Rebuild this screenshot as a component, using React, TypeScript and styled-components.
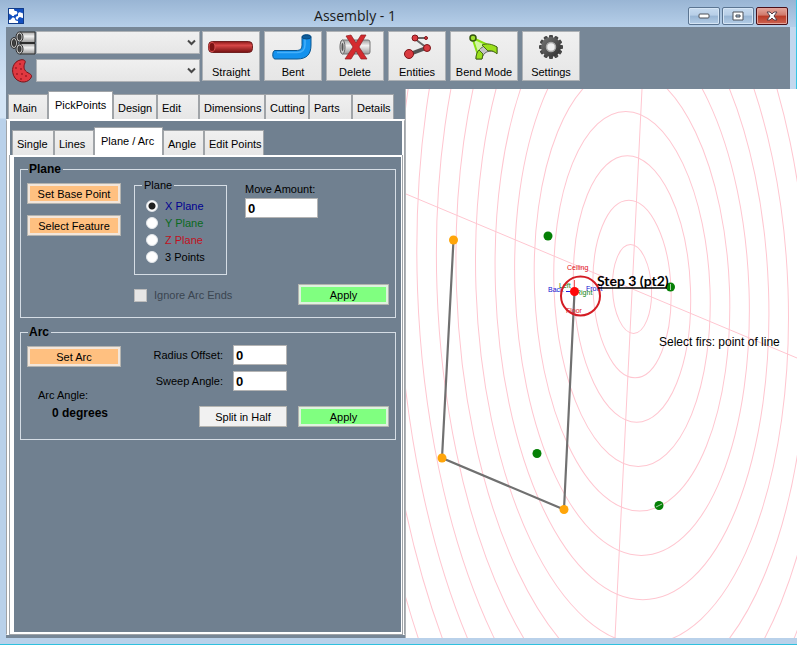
import React from 'react';
import styled, { createGlobalStyle, css } from 'styled-components';

const slate = '#708090';
const strip = '#778797';
const edge = '#a0a4a8';

const GlobalStyle = createGlobalStyle`
  *, *::before, *::after { box-sizing: border-box; }
  body { margin: 0; }
  body, button, input, select {
    font-family: "Liberation Sans", Arial, sans-serif;
    font-size: 11px;
    line-height: 14px;
    color: #000;
  }
`;

const Window = styled.div`
  display: flex;
  flex-direction: column;
  min-height: 100vh;
  background: linear-gradient(#99b5d4 0, #b6cfe9 27px, #d3e4f5 88px, #d3e4f5 118px, #b9d1ea 119px);
  border-bottom: 1px solid #2fc0de;
`;

const TitleBar = styled.header`
  display: grid;
  grid-template-columns: 1fr auto 1fr;
  align-items: center;
  height: 27px;
  padding: 4px 8px 0;
  border-right: 1px solid #35c5e5;
`;

const Title = styled.h1`
  margin: 0;
  padding-right: 86px;
  font: 400 14px/20px "Open Sans", "Noto Sans", sans-serif;
  color: #1a1a1a;
  grid-column: 2;
`;

const Caption = styled.div`
  display: flex;
  justify-content: flex-end;
  gap: 2px;
`;

const CaptionButton = styled.button<{ $close?: boolean }>`
  display: flex;
  align-items: center;
  justify-content: center;
  width: 32px;
  height: 18px;
  padding: 0;
  border: 1px solid ${p => (p.$close ? '#4a1018' : '#5b7592')};
  border-radius: 2px;
  background: ${p => (p.$close
    ? 'linear-gradient(#e3a79d 0, #d0796b 45%, #b93a26 50%, #cc6352 100%)'
    : 'linear-gradient(#c7dbf0 0, #b7cee7 45%, #98b5d4 50%, #b4cde7 100%)')};
  box-shadow: inset 0 0 0 1px ${p => (p.$close ? '#e3a399' : '#d5e5f5')};
`;

const Toolbar = styled.div`
  display: flex;
  align-items: flex-start;
  gap: 4px;
  height: 62px;
  margin: 0 7px 0 6px;
  padding: 4px 4px 0;
  background: ${strip};
  box-shadow: 6px 0 0 #c3d8ee, 7px 0 0 #35c5e5;
`;

const Pickers = styled.div`
  display: grid;
  grid-template-columns: 26px 164px;
  row-gap: 4px;
  margin-right: -2px;
`;

const Combo = styled.label`
  position: relative;
  display: block;

  svg { position: absolute; right: 4px; top: 8px; pointer-events: none; }
`;

const Select = styled.select`
  display: block;
  width: 100%;
  height: 23px;
  appearance: none;
  border: 1px solid #adb1b5;
  border-radius: 0;
  background: linear-gradient(#f0f0f0, #e6e6e6);
`;

const ToolButton = styled.button<{ $wide?: boolean }>`
  display: flex;
  flex-direction: column;
  align-items: center;
  justify-content: space-between;
  width: ${p => (p.$wide ? 68 : 58)}px;
  height: 50px;
  padding: 1px 0;
  border: 1px solid #adb1b5;
  background: linear-gradient(#f0f0f0, #e6e6e6);
  white-space: nowrap;
`;

const Body = styled.main`
  display: flex;
  flex: 1;
  margin-left: 6px;
`;

const Panel = styled.section`
  display: flex;
  flex-direction: column;
  flex: 0 0 399px;
  padding-bottom: 3px;
  background: ${strip};
`;

const Tabs = styled.div<{ $inner?: boolean }>`
  display: flex;
  align-items: flex-end;
  height: ${p => (p.$inner ? 34 : 30)}px;
  padding-left: 2px;
  background: ${p => (p.$inner ? slate : strip)};
`;

const Tab = styled.button<{ $w: number; $on?: boolean }>`
  width: ${p => p.$w}px;
  height: 25px;
  padding: 1px 0 0 4px;
  border: 1px solid ${edge};
  border-bottom: 0;
  background: linear-gradient(#f0f0f0, #e6e6e6);
  text-align: left;
  white-space: nowrap;
  ${p => p.$on && css`
    height: 28px;
    padding: 0 0 2px 6px;
    background: #fff;
  `}
`;

const OuterPage = styled.div`
  display: flex;
  flex: 1;
  flex-direction: column;
  border: 1px solid ${edge};
  border-top: 2px solid #fff;
  border-bottom-color: #fff;
  background: #fff;
  padding: 0 2px 0 3px;
`;

const InnerPage = styled.div`
  display: flex;
  flex: 1;
  flex-direction: column;
  gap: 7px;
  border: solid #fff;
  border-width: 2px 1px 2px 4px;
  outline: 1px solid ${edge};
  outline-offset: 0;
  clip-path: inset(0 -1px -1px -1px);
  background: ${slate};
  padding: 5px 5px 0 6px;
`;

const Group = styled.fieldset`
  display: grid;
  grid-template-columns: 94px 93px 1fr;
  column-gap: 13px;
  margin: 0;
  min-width: 0;
  padding: 2px 6px 12px;
  border: 1px solid #d5dde5;
`;

const Legend = styled.legend`
  margin-left: 1px;
  padding: 0 2px 0 1px;
  font: 700 12px/14px "Liberation Sans", Arial, sans-serif;
`;

const SubGroup = styled.fieldset`
  display: flex;
  flex-direction: column;
  gap: 3px;
  margin: 0;
  min-width: 0;
  height: 97px;
  padding: 7px 0 0 11px;
  border: 1px solid #d5dde5;

  legend { margin-left: -4px; padding: 0 2px; }
`;

const Choice = styled.label<{ $color?: string }>`
  display: flex;
  align-items: center;
  gap: 7px;
  color: ${p => p.$color || '#000'};
  white-space: nowrap;
`;

const Radio = styled.input`
  appearance: none;
  flex: none;
  width: 12px;
  height: 12px;
  margin: 0;
  border-radius: 50%;
  border: 1px solid #e2e6ea;
  background: #fff;
  &:checked { background: radial-gradient(circle, #202020 0 3px, #fff 4px); }
`;

const Check = styled.input`
  appearance: none;
  flex: none;
  width: 13px;
  height: 13px;
  margin: 0;
  border: 1px solid #bcbcbc;
  background: #e6e6e6;
`;

const Column = styled.div<{ $top?: number; $gap?: number }>`
  display: flex;
  flex-direction: column;
  align-items: stretch;
  gap: ${p => p.$gap ?? 0}px;
  padding-top: ${p => p.$top ?? 0}px;
`;

const fills = { orange: ['#ffc080', '#f3e6da'], green: ['#80ff80', '#def3de'], plain: ['#f1f1f1', '#f1f1f1'] };

const Action = styled.button<{ $tone: keyof typeof fills }>`
  height: 21px;
  width: 100%;
  padding: 0;
  border: 1px solid #b4b4b0;
  background: ${p => fills[p.$tone][0]};
  box-shadow: inset 0 0 0 2px ${p => fills[p.$tone][1]};
`;

const Field = styled.label<{ $stacked?: boolean }>`
  display: flex;
  flex-direction: ${p => (p.$stacked ? 'column' : 'row')};
  align-items: ${p => (p.$stacked ? 'flex-start' : 'center')};
  justify-content: flex-end;
  gap: ${p => (p.$stacked ? 2 : 10)}px;
`;

const TextBox = styled.input<{ $w: number }>`
  width: ${p => p.$w}px;
  height: 20px;
  padding: 0 2px;
  border: 1px solid #b4b4b4;
  background: #fff;
  font: 700 13px/16px "Liberation Sans", Arial, sans-serif;
`;

const MoveColumn = styled(Column)`
  min-height: 127px;
  padding-left: 5px;
  justify-content: space-between;
`;

const ApplySlot = styled.div`
  width: 91px;
  align-self: flex-end;
`;

const ArcSide = styled(Column)`
  grid-column: 2 / 4;
`;

const ArcFields = styled(Column)`
  align-self: flex-start;
  width: 153px;
`;

const ArcButtons = styled.div`
  display: grid;
  grid-template-columns: 88px 91px;
  gap: 11px;
  justify-content: end;
  margin-top: 15px;
`;

const Result = styled.output`
  padding: 4px 0 0 14px;
  font: 700 12px/14px "Liberation Sans", Arial, sans-serif;
`;

const ArcAngle = styled.div`
  display: flex;
  flex-direction: column;
  padding: 21px 0 0 11px;
`;

const View = styled.div`
  flex: 1;
  min-width: 0;
  display: flex;
  background: #fff;
  border-left: 1px solid #b0b4b8;
`;

const Drawing = styled.svg`
  flex: 1;
  display: block;
  width: 100%;
  min-height: 549px;
  height: 100%;
  contain: size;
`;

const Footer = styled.footer`
  height: 6px;
  background: #b9d1ea;
`;

const Logo = () => (
  <svg width="16" height="16" viewBox="0 0 16 16">
    <path fill="#1450c0" d="M0 0h16v16H0z" />
    <path fill="#fff" d="M1 1h5c0 2 1 2 2 2s2 2 1 3-3 0-3 2H4C4 6 1 7 1 5z" />
    <path fill="#fff" d="M10 6c0-2 3-2 3-1 2-1 2 1 2 3v2c-2 0-2-1-3-1s-2 1-2 2-1 1-2 0 0-3 2-3z" />
    <path fill="#fff" d="M1 15v-3c2 0 2-1 3-2s3 0 3 1 1 2 3 2v2z" />
    <path fill="none" stroke="#123c88" d="M.5.5h15v15H.5z" />
  </svg>
);

const PipesIcon = () => (
  <svg width="26" height="24" viewBox="0 0 26 24">
    <defs>
      <linearGradient id="steel" x1="0" y1="0" x2="0" y2="1"><stop stopColor="#a0a0a0" /><stop offset=".4" stopColor="#f2f2f2" /><stop offset="1" stopColor="#999" /></linearGradient>
    </defs>
    <g stroke="#2c2c2c">
      <ellipse cx="4" cy="12" rx="3.500" ry="5.500" fill="#c0c0c0" /><ellipse cx="4" cy="12" rx="1.500" ry="3.500" fill="#444" />
      <path fill="url(#steel)" d="M10 1h15v10.500H10z" /><path fill="url(#steel)" d="M10 12.500h15V23H10z" />
      <ellipse cx="9.500" cy="6" rx="3.500" ry="5" fill="#c8c8c8" /><ellipse cx="9.500" cy="6" rx="1.500" ry="3" fill="#444" />
      <ellipse cx="9.500" cy="18" rx="3.500" ry="5" fill="#c8c8c8" /><ellipse cx="9.500" cy="18" rx="1.500" ry="3" fill="#444" />
    </g>
  </svg>
);

const WedgeIcon = () => (
  <svg width="26" height="24" viewBox="0 0 26 24">
    <path fill="#e03840" stroke="#7a1218" d="M11 .8c3-.5 5 1 4 3-2 4-1 8 3 10 2 1 4 2 3.500 4C19 24 10 25 5 19 0 12 3 2 11 .8z" />
    <g fill="#9c1820"><circle cx="10" cy="5" r=".9" /><circle cx="6" cy="9" r=".9" /><circle cx="11" cy="10" r=".9" /><circle cx="7" cy="15" r=".9" /><circle cx="12" cy="15" r=".9" /><circle cx="16" cy="17" r=".9" /><circle cx="11" cy="20" r=".9" /></g>
  </svg>
);

const Chevron = () => (
  <svg width="9" height="7" viewBox="0 0 9 7"><path d="M1 1.500l3.500 3.500L8 1.500" fill="none" stroke="#484848" strokeWidth="2" /></svg>
);

const StraightIcon = () => (
  <svg width="48" height="28" viewBox="0 0 48 28">
    <defs>
      <linearGradient id="rod" x1="0" y1="0" x2="0" y2="1"><stop stopColor="#8a1818" /><stop offset=".35" stopColor="#d84848" /><stop offset="1" stopColor="#741010" /></linearGradient>
    </defs>
    <rect x="1.500" y="8.500" width="44" height="11" rx="4" fill="url(#rod)" stroke="#702020" />
    <ellipse cx="5" cy="14" rx="3" ry="4.500" fill="#7c1414" stroke="#d85050" />
  </svg>
);

const BentIcon = () => (
  <svg width="42" height="28" viewBox="0 0 42 28">
    <path d="M3 17.500h21c5 0 6-2 6-6V4c0-3 9-3 9 0v8c0 9-4 14-14 14H3c-3 0-3-8.500 0-8.500z" fill="#1492ee" stroke="#0a5690" />
    <path d="M5 19.500h20c6 0 8-3 8-8V6" fill="none" stroke="#45b0fa" strokeWidth="1.500" />
    <ellipse cx="34.500" cy="4" rx="4.500" ry="2" fill="#0b5c9c" stroke="#084a80" />
  </svg>
);

const DeleteIcon = () => (
  <svg width="34" height="28" viewBox="0 0 34 28">
    <rect x="3" y="7" width="29" height="14" rx="2" fill="url(#steel)" stroke="#777" />
    <ellipse cx="4.500" cy="14" rx="2.500" ry="7" fill="#ccc" stroke="#666" /><ellipse cx="4.500" cy="14" rx="1" ry="4" fill="#555" />
    <path d="M8 3l5-1 5 8 5-8h5l-7 12 8 12h-6l-5-8-5 8H7l8-12z" fill="#d42a2e" stroke="#8c2024" strokeWidth=".7" />
  </svg>
);

const EntitiesIcon = () => (
  <svg width="34" height="28" viewBox="0 0 34 28">
    <path d="M14 5h11M15 6l12 9" fill="none" stroke="#666" strokeWidth="2" />
    <path d="M26 15L10 21" stroke="#555" strokeWidth="4" />
    <g fill="#d93a40" stroke="#7c1518"><circle cx="15" cy="5" r="3" /><circle cx="26" cy="5" r="1.500" /><circle cx="27" cy="15" r="3.500" /><circle cx="9" cy="21" r="4.500" /></g>
  </svg>
);

const BendModeIcon = () => (
  <svg width="32" height="28" viewBox="0 0 32 28">
    <path d="M5 4L9 21c1-4 5-7 10-8z" fill="#d3f5a4" />
    <path d="M7 6l15 7M5 7l5 15" stroke="#8ae010" strokeWidth="2" />
    <path d="M8 26c0-10 9-17 21-12v6c-8-4-14-1-15 6z" fill="#c4c4c4" stroke="#666" />
    <path d="M14 12c5-2 10-1 15 2v7c-3-3-6-4-9-3z" fill="#9be01c" stroke="#456c10" />
    <path d="M8 26c0-4 1-7 3-9l4 4-1 5z" fill="#9be01c" stroke="#456c10" />
    <circle cx="5" cy="5" r="3" fill="#a0e030" stroke="#345410" strokeWidth="1.500" />
  </svg>
);

const SettingsIcon = () => (
  <svg width="28" height="28" viewBox="-14 -14 28 28">
    <defs><linearGradient id="gear" x1="0" y1="0" x2="1" y2="1"><stop stopColor="#777" /><stop offset="1" stopColor="#2c2c2c" /></linearGradient></defs>
    {[0, 30, 60, 90, 120, 150].map(a => <rect key={a} x="-2" y="-12" width="4" height="24" rx="1" fill="#484848" transform={`rotate(${a})`} />)}
    <circle r="10" fill="url(#gear)" />
    <circle r="4.500" fill="#eee" stroke="#aaa" strokeWidth="1.500" />
  </svg>
);

const tools = [
  { label: 'Straight', Icon: StraightIcon },
  { label: 'Bent', Icon: BentIcon },
  { label: 'Delete', Icon: DeleteIcon },
  { label: 'Entities', Icon: EntitiesIcon },
  { label: 'Bend Mode', Icon: BendModeIcon, wide: true },
  { label: 'Settings', Icon: SettingsIcon },
];

const mainTabs: [string, number][] = [
  ['Main', 40], ['PickPoints', 65], ['Design', 44], ['Edit', 42],
  ['Dimensions', 66], ['Cutting', 44], ['Parts', 43], ['Details', 42],
];
const pointTabs: [string, number][] = [
  ['Single', 42], ['Lines', 40], ['Plane / Arc', 69], ['Angle', 41], ['Edit Points', 60],
];
const planes: [string, string][] = [
  ['X Plane', '#000090'], ['Y Plane', '#0a6a20'], ['Z Plane', '#c01020'], ['3 Points', '#000'],
];

const Scene = () => (
  <Drawing viewBox="0 0 391 549" preserveAspectRatio="xMinYMin slice">
    <g fill="none" stroke="#ffc6d0">
      <g transform="translate(226 200) skewX(2)">
        {Array.from({ length: 15 }, (_, i) => (
          <ellipse key={i} rx={(i + 1) * 19.5} ry={(i + 1) * 44.4} />
        ))}
      </g>
      <path d="M236 0L209 549M0 105L391 269" />
    </g>
    <path d="M47.500 151L36 369l122 51.500L168.500 203" fill="none" stroke="#707070" strokeWidth="2.200" />
    <g fill="#ffa50a"><circle cx="47.500" cy="151" r="4.500" /><circle cx="36" cy="369" r="4.500" /><circle cx="158" cy="420.500" r="4.500" /></g>
    <g fill="#068006"><circle cx="142" cy="147" r="4.500" /><circle cx="264.500" cy="198" r="4.500" /><circle cx="131" cy="364.500" r="4.500" /><circle cx="253" cy="416.500" r="4.500" /></g>
    <path d="M250 418l6-3M264.500 195v6" stroke="#a8cfa8" />
    <path d="M160 202.500h7" stroke="#2020e0" />
    <path d="M168.500 191v8" stroke="#f06060" />
    <g fontFamily="Liberation Sans, Arial, sans-serif" fontSize="7">
      <text x="161" y="181" fill="#e01020">Ceiling</text>
      <text x="142" y="203" fill="#1010d0">Back</text>
      <text x="153" y="199" fill="#108010">Left</text>
      <text x="170" y="206" fill="#108010">Right</text>
      <text x="180" y="202" fill="#1010d0">Front</text>
      <text x="160" y="224" fill="#e01020">Floor</text>
    </g>
    <circle cx="168.500" cy="202.500" r="4.500" fill="#ff0808" />
    <circle cx="174.500" cy="207" r="19.500" fill="none" stroke="#d41c24" strokeWidth="2" />
    <path d="M192 199h69" stroke="#000" strokeWidth="1.500" />
    <text x="191" y="197" fontFamily="Lato, sans-serif" fontWeight="700" fontSize="14">Step 3 (pt2)</text>
    <text x="253" y="257" fontFamily="Liberation Sans, Arial, sans-serif" fontSize="12">Select firs: point of line</text>
  </Drawing>
);

export default function App() {
  return (
    <Window>
      <GlobalStyle />
      <TitleBar>
        <Logo />
        <Title>Assembly - 1</Title>
        <Caption>
          <CaptionButton aria-label="Minimize">
            <svg width="12" height="6"><rect x="1" y="1" width="10" height="4" rx="1" fill="#fff" stroke="#4c5058" /></svg>
          </CaptionButton>
          <CaptionButton aria-label="Maximize">
            <svg width="12" height="10"><path d="M1 1h10v8H1zM4 4v2h4V4z" fill="#fff" fillRule="evenodd" stroke="#4c5058" /></svg>
          </CaptionButton>
          <CaptionButton aria-label="Close" $close>
            <svg width="12" height="10"><path d="M1 1h3l2 2 2-2h3L8 5l3 4H8L6 7 4 9H1l3-4z" fill="#fff" stroke="#54404a" /></svg>
          </CaptionButton>
        </Caption>
      </TitleBar>

      <Toolbar>
        <Pickers>
          <PipesIcon />
          <Combo><Select aria-label="Pipe type" /><Chevron /></Combo>
          <WedgeIcon />
          <Combo><Select aria-label="Bend type" /><Chevron /></Combo>
        </Pickers>
        {tools.map(({ label, Icon, wide }) => (
          <ToolButton key={label} $wide={wide}><Icon />{label}</ToolButton>
        ))}
      </Toolbar>

      <Body>
        <Panel>
          <Tabs role="tablist">
            {mainTabs.map(([t, w]) => <Tab key={t} role="tab" $w={w} $on={t === 'PickPoints'} aria-selected={t === 'PickPoints'}>{t}</Tab>)}
          </Tabs>
          <OuterPage>
            <Tabs role="tablist" $inner>
              {pointTabs.map(([t, w]) => <Tab key={t} role="tab" $w={w} $on={t === 'Plane / Arc'} aria-selected={t === 'Plane / Arc'}>{t}</Tab>)}
            </Tabs>
            <InnerPage>
              <Group>
                <Legend>Plane</Legend>
                <Column $top={5} $gap={11}>
                  <Action $tone="orange">Set Base Point</Action>
                  <Action $tone="orange">Select Feature</Action>
                </Column>
                <Column $gap={13}>
                  <SubGroup>
                    <legend>Plane</legend>
                    {planes.map(([name, color], i) => (
                      <Choice key={name} $color={color}>
                        <Radio type="radio" name="plane" defaultChecked={i === 0} />{name}
                      </Choice>
                    ))}
                  </SubGroup>
                  <Choice $color="#3a4550"><Check type="checkbox" disabled />Ignore Arc Ends</Choice>
                </Column>
                <MoveColumn $top={4}>
                  <Field $stacked>Move Amount:<TextBox $w={73} defaultValue="0" /></Field>
                  <ApplySlot><Action $tone="green">Apply</Action></ApplySlot>
                </MoveColumn>
              </Group>

              <Group>
                <Legend>Arc</Legend>
                <Column $top={5}>
                  <Action $tone="orange">Set Arc</Action>
                  <ArcAngle>Arc Angle:<Result>0 degrees</Result></ArcAngle>
                </Column>
                <ArcSide $top={4}>
                  <ArcFields $gap={6}>
                    <Field>Radius Offset:<TextBox $w={54} defaultValue="0" /></Field>
                    <Field>Sweep Angle:<TextBox $w={54} defaultValue="0" /></Field>
                  </ArcFields>
                  <ArcButtons>
                    <Action $tone="plain">Split in Half</Action>
                    <Action $tone="green">Apply</Action>
                  </ArcButtons>
                </ArcSide>
              </Group>
            </InnerPage>
          </OuterPage>
        </Panel>
        <View><Scene /></View>
      </Body>
      <Footer />
    </Window>
  );
}
